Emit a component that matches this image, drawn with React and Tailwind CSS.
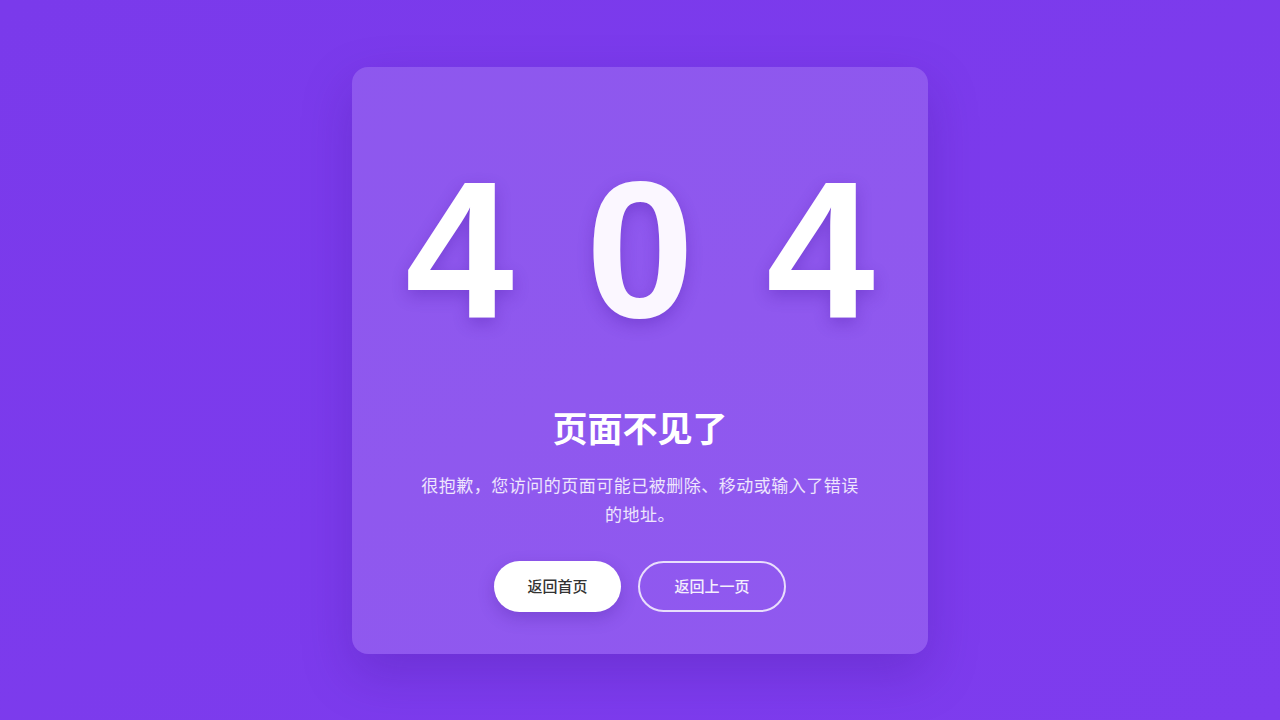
export default function App() {
  return (
    <div className="flex h-[720px] w-full items-center justify-center bg-gradient-to-br from-[#7a3aeb] to-[#7e3cee] font-['Liberation_Sans','Noto_Sans_CJK_SC',sans-serif]">
      <div className="flex h-[587px] w-[576px] flex-col items-center rounded-2xl bg-white/15 px-12 pt-[85px] shadow-[0_20px_50px_rgba(60,20,140,0.25)]">
        <div className="flex gap-[72px] text-[195px] font-bold leading-none text-white [text-shadow:0_6px_16px_rgba(70,20,160,0.3)]">
          <span>4</span>
          <span className="text-[#fbf7ff]">0</span>
          <span>4</span>
        </div>
        <h1 className="mt-[61px] text-[35px] font-bold leading-tight text-white">
          页面不见了
        </h1>
        <p className="mt-[21px] max-w-[454px] text-center text-[17px] leading-[29px] tracking-[0.5px] text-white/85">
          很抱歉，您访问的页面可能已被删除、移动或输入了错误的地址。
        </p>
        <div className="mt-[31px] flex gap-[17px]">
          <button className="h-[51px] w-[127px] rounded-full bg-white text-[15px] font-medium text-[#333] shadow-[0_6px_16px_rgba(60,20,140,0.25)]">
            返回首页
          </button>
          <button className="h-[51px] w-[148px] rounded-full border-2 border-white/80 text-[15px] font-medium text-white/90">
            返回上一页
          </button>
        </div>
      </div>
    </div>
  );
}
